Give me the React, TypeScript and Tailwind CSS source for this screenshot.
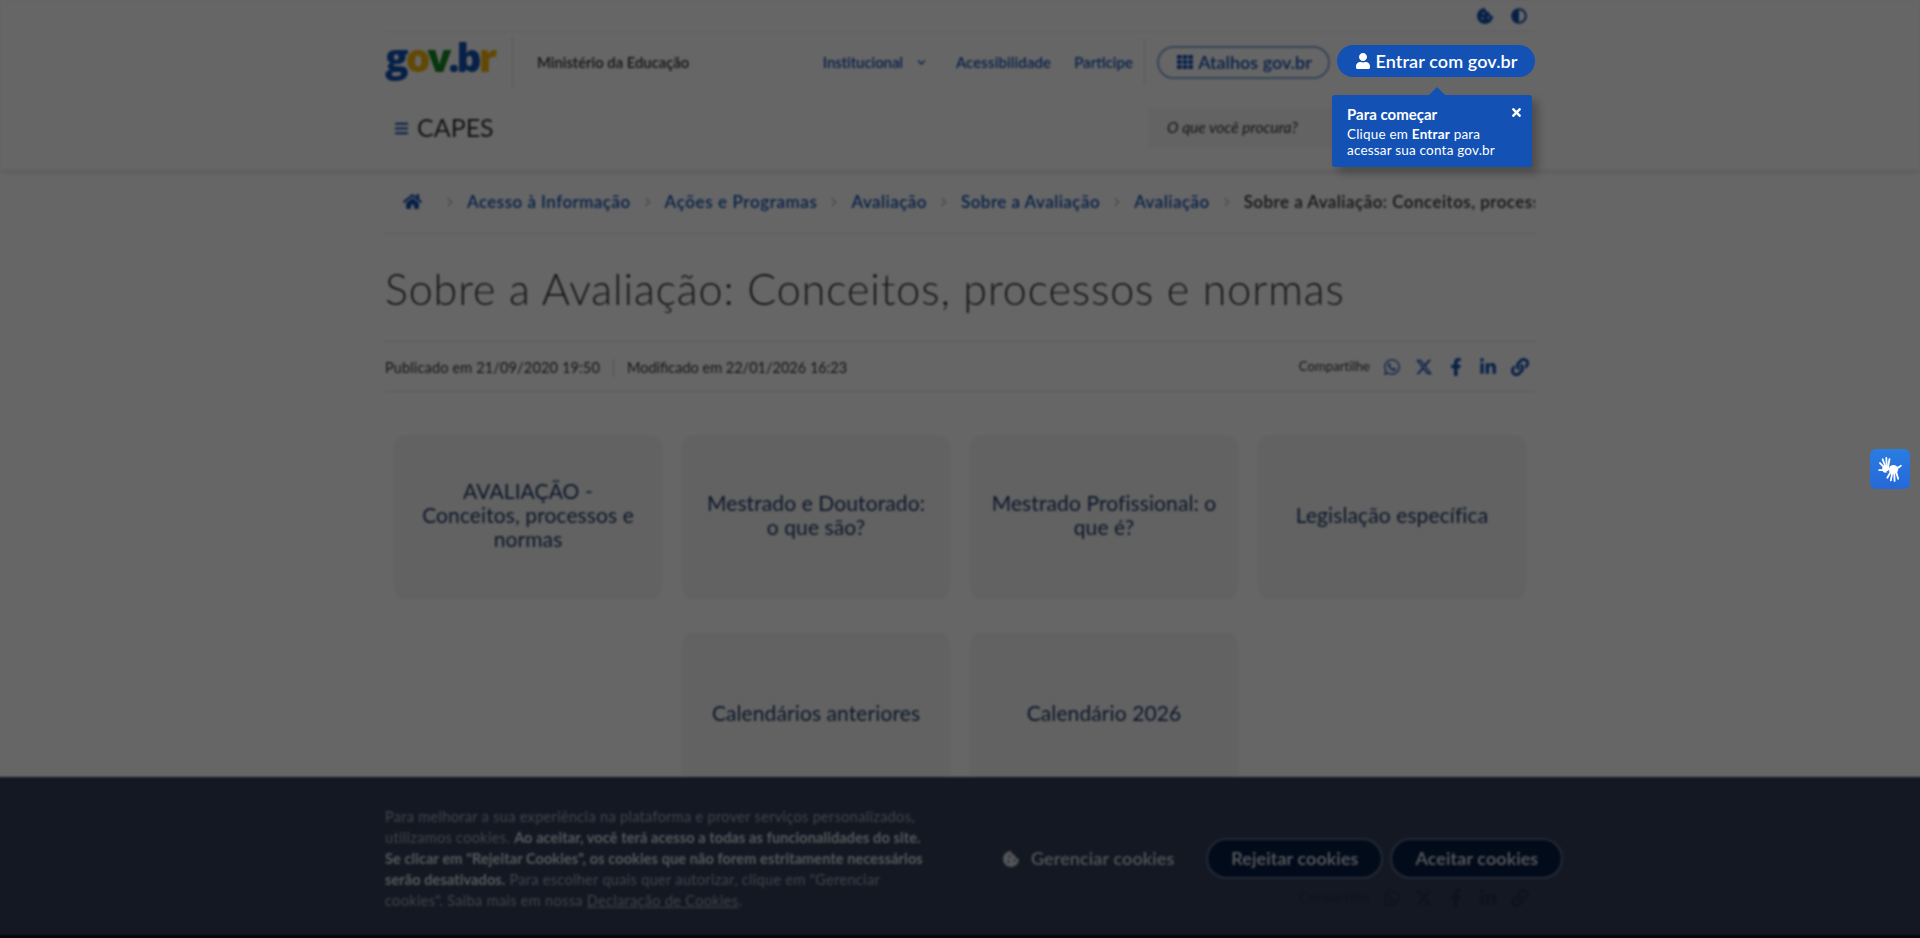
import { FaAdjust, FaBars, FaChevronDown, FaChevronRight, FaCookieBite, FaFacebookF, FaHome, FaLink, FaLinkedinIn, FaTh, FaTimes, FaUser, FaWhatsapp } from "react-icons/fa";
import { FaXTwitter } from "react-icons/fa6";

function Share() {
  return (
    <div className="flex items-center">
      <span className="text-[13px] text-[#333] mr-[13px] tracking-[0.1px]">Compartilhe</span>
      <div className="flex items-center gap-[14px] text-[#1351b4] text-[18px]">
        <FaWhatsapp />
        <FaXTwitter />
        <FaFacebookF />
        <FaLinkedinIn />
        <FaLink />
      </div>
    </div>
  );
}

function Crumb({ label, current, wide }: { label: string; current?: boolean; wide?: boolean }) {
  return (
    <div className="flex items-center shrink-0">
      <FaChevronRight className="text-[#c4c4c4] text-[10px] mx-[12px]" />
      <span className={(current ? "text-[#333] font-semibold" : "text-[#1351b4] font-semibold") + (wide ? " tracking-[0.6px]" : "")}>{label}</span>
    </div>
  );
}

function Card({ children }: { children: React.ReactNode }) {
  return (
    <div className="w-[268px] h-[163px] rounded-[12px] bg-[#f4f4f4] shadow-[0_1px_2px_rgba(0,0,0,0.05)] flex items-center justify-center text-center px-[18px] pb-[4px] text-[21px] leading-[24px] tracking-[0.1px] text-[#1f3a68]">
      <span>{children}</span>
    </div>
  );
}

function Hands() {
  return (
    <svg viewBox="0 0 24 24" className="w-[26px] h-[26px]" fill="none" strokeLinecap="round">
      <g stroke="#fff" strokeWidth="1.7">
        <path d="M7 11 L2.8 6.5" />
        <path d="M7.8 10 L5.2 3" />
        <path d="M9 10 L8.6 1.8" />
        <path d="M10.2 10 L11.5 3" />
        <path d="M6.5 13 L2 13" />
      </g>
      <ellipse cx="8" cy="12" rx="3.2" ry="3.4" fill="#fff" />
      <path d="M11.5 13 L9 15" stroke="#2a74dd" strokeWidth="1" />
      <g stroke="#fff" strokeWidth="1.7">
        <path d="M12.5 15 L9.5 20" />
        <path d="M14 16 L12.8 22.5" />
        <path d="M16 16 L16.2 23" />
        <path d="M17.8 15 L19.5 21" />
        <path d="M18.5 11.5 L22 9" />
      </g>
      <circle cx="15.2" cy="12.5" r="4.3" fill="#fff" />
    </svg>
  );
}

export default function App() {
  return (
    <div className="relative h-[938px] overflow-hidden bg-white font-['Lato','Liberation_Sans',sans-serif]">
      <div className="blur-[1.2px] h-full">
        <header className="h-[170px] shadow-[0_1px_6px_rgba(0,0,0,0.16)]">
          <div className="w-[1150px] mx-auto">
            <div className="h-[32px] flex items-center justify-end gap-[18px] pr-[8px] border-b border-[#f0f0f0] text-[#1351b4] text-[16px]">
              <FaCookieBite />
              <FaAdjust />
            </div>
            <div className="h-[60px] flex items-center">
              <div className="w-[128px] h-[50px] border-r border-[#ddd] flex items-center">
                <span className="font-['Open_Sans',sans-serif] font-extrabold text-[39px] leading-none tracking-[-3px] -mt-[11px]">
                  <span className="text-[#1351b4]">g</span>
                  <span className="text-[#f5b50c]">o</span>
                  <span className="text-[#168821]">v</span>
                  <span className="text-[#1351b4]">.b</span>
                  <span className="text-[#f5b50c]">r</span>
                </span>
              </div>
              <span className="ml-[24px] text-[14.8px] font-semibold text-[#333]">Ministério da Educação</span>
              <div className="ml-auto flex items-center text-[15px] font-semibold text-[#1351b4]">
                <span className="tracking-[-0.1px]">Institucional</span>
                <FaChevronDown className="ml-[14px] text-[9px]" />
                <span className="ml-[30px] tracking-[0.1px]">Acessibilidade</span>
                <span className="ml-[23px]">Participe</span>
                <div className="ml-[11px] h-[46px] border-l border-[#ddd]" />
                <div className="ml-[12px] w-[173px] h-[33px] rounded-full border-2 border-[#1351b4]/50 flex items-center justify-center gap-[5px] text-[18px] pl-[2px]">
                  <FaTh className="text-[16px]" />
                  <span>Atalhos gov.br</span>
                </div>
                <div className="ml-[7px] w-[198px] h-[32px]" />
              </div>
            </div>
            <div className="h-[78px] flex items-center pb-[6px]">
              <FaBars className="ml-[9px] text-[#1351b4] text-[15px]" />
              <span className="ml-[8px] text-[25px] text-[#333]">CAPES</span>
              <div className="ml-auto mr-[203px] w-[184px] h-[40px] bg-[#f8f8f8] flex items-center pl-[19px] text-[15.5px] italic text-[#333]">O que você procura?</div>
            </div>
          </div>
        </header>
        <main className="w-[1150px] mx-auto">
          <div className="h-[64px] flex items-center border-b border-[#e6e6e6] text-[17px] tracking-[0.45px] overflow-hidden whitespace-nowrap pl-[18px]">
            <FaHome className="text-[#1351b4] text-[19px] shrink-0 mr-[8px]" />
            <div className="w-[3px] shrink-0" />
            <Crumb label="Acesso à Informação" />
            <Crumb label="Ações e Programas" wide />
            <Crumb label="Avaliação" />
            <Crumb label="Sobre a Avaliação" />
            <Crumb label="Avaliação" />
            <Crumb label="Sobre a Avaliação: Conceitos, processos e normas" current />
          </div>
          <h1 className="h-[108px] flex items-center pt-[3px] text-[43px] font-light text-[#333] border-b border-[#e0e0e0] tracking-[0.9px]">Sobre a Avaliação: Conceitos, processos e normas</h1>
          <div className="h-[50px] flex items-center justify-between border-b border-[#e6e6e6] pr-[6px]">
            <div className="flex items-center pt-[2px] text-[14.5px] text-[#333]">
              <span className="tracking-[0.15px]">Publicado em 21/09/2020 19:50</span>
              <div className="mx-[13px] h-[18px] border-l border-[#ccc]" />
              <span>Modificado em 22/01/2026 16:23</span>
            </div>
            <Share />
          </div>
          <div className="mt-[43px] flex flex-wrap justify-center gap-x-[20px] gap-y-[35px]">
            <Card>AVALIAÇÃO - <br />Conceitos, processos e normas</Card>
            <Card>Mestrado e Doutorado:<br />o que são?</Card>
            <Card>Mestrado Profissional: o que é?</Card>
            <Card>Legislação específica</Card>
            <Card>Calendários anteriores</Card>
            <Card>Calendário 2026</Card>
          </div>
          <div className="mt-[92px] flex justify-end pr-[6px]">
            <Share />
          </div>
        </main>
        <div className="absolute -left-[4px] -right-[4px] top-[777px] h-[167px] bg-[#202e48]/92 border-b-[9px] border-[#0a0f1c]">
          <div className="w-[1150px] mx-auto h-full flex items-center">
            <p className="w-[548px] shrink-0 pt-[5px] text-[14.5px] tracking-[0.32px] leading-[21px] text-[#a0a8b8]">
              Para melhorar a sua experiência na plataforma e prover serviços personalizados, utilizamos cookies. <b className="text-[#d8dce4] tracking-[0.1px]">Ao aceitar, você terá acesso a todas as funcionalidades do site. Se clicar em "Rejeitar Cookies", os cookies que não forem estritamente necessários serão desativados.</b> Para escolher quais quer autorizar, clique em "Gerenciar cookies". Saiba mais em nossa <u>Declaração de Cookies</u>.
            </p>
            <div className="ml-[70px] pt-[5px] flex items-center text-[18px] tracking-[0.1px] font-semibold shrink-0">
              <FaCookieBite className="text-[#cfd3da] text-[16px] mr-[12px]" />
              <span className="text-[#cfd3da] mr-[32px]">Gerenciar cookies</span>
              <div className="w-[177px] h-[41px] rounded-full border-2 border-[#5a6a88] bg-[#071d41] text-[#dfe3ea] flex items-center justify-center">Rejeitar cookies</div>
              <div className="ml-[7px] w-[173px] h-[41px] rounded-full border-2 border-[#5a6a88] bg-[#071d41] text-[#dfe3ea] flex items-center justify-center">Aceitar cookies</div>
            </div>
          </div>
        </div>
      </div>
      <div className="absolute inset-0 bg-black/60" />
      <div className="absolute left-[1337px] top-[45px] w-[198px] h-[32px] rounded-full bg-[#1351b4] text-white flex items-center justify-center gap-[4px] text-[18px] font-semibold tracking-[0.1px] pl-[1px]">
        <FaUser className="text-[16px]" />
        <span>Entrar com gov.br</span>
      </div>
      <div className="absolute left-[1332px] top-[95px] w-[200px] h-[72px] rounded-[3px] bg-[#1351b4] text-white px-[15px] pt-[10px] shadow-[6px_6px_8px_rgba(0,0,0,0.25)]">
        <div className="absolute left-[97px] -top-[8px] w-0 h-0 border-x-[8px] border-x-transparent border-b-[8px] border-b-[#1351b4]" />
        <FaTimes className="absolute right-[9px] top-[11px] text-[13px]" />
        <div className="text-[15px] font-bold leading-[18px]">Para começar</div>
        <div className="mt-[3px] text-[13.5px] tracking-[0.2px] leading-[16px]">Clique em <b>Entrar</b> para<br />acessar sua conta gov.br</div>
      </div>
      <div className="absolute left-[1870px] top-[449px] w-[40px] h-[40px] rounded-[6px] bg-gradient-to-b from-[#2a7de1] to-[#2668d8] flex items-center justify-center">
        <Hands />
      </div>
    </div>
  );
}
